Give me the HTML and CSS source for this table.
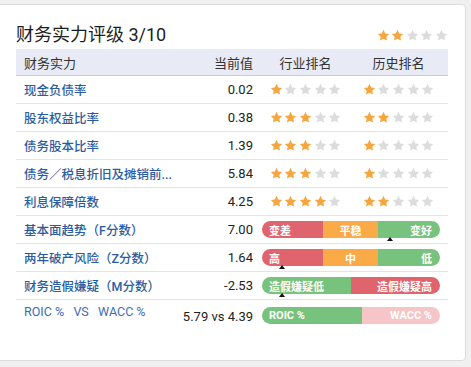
FILE: index.html
```html
<!DOCTYPE html>
<html lang="zh">
<head>
<meta charset="utf-8">
<title>财务实力评级</title>
<link rel="stylesheet" href="styles.css">
</head>
<body>
<svg class="defs" width="0" height="0" aria-hidden="true">
  <symbol id="star" viewBox="0 0 24 24"><path d="M12 1.5l3.2 6.6 7.3 1-5.3 5 1.3 7.2L12 17.9l-6.5 3.4 1.3-7.2-5.3-5 7.3-1z"/></symbol>
</svg>
<div class="card">
  <div class="title-row">
    <h2 class="title">财务实力评级 3/10</h2>
    <div class="stars"><svg class="on"><use href="#star"/></svg><svg class="on"><use href="#star"/></svg><svg><use href="#star"/></svg><svg><use href="#star"/></svg><svg><use href="#star"/></svg></div>
  </div>
  <div class="table">
    <div class="row head">
      <div class="name">财务实力</div>
      <div class="val">当前值</div>
      <div class="c">行业排名</div>
      <div class="c">历史排名</div>
    </div>
    <div class="row">
      <div class="name">现金负债率</div>
      <div class="val">0.02</div>
      <div class="c"><div class="stars"><svg class="on"><use href="#star"/></svg><svg><use href="#star"/></svg><svg><use href="#star"/></svg><svg><use href="#star"/></svg><svg><use href="#star"/></svg></div></div>
      <div class="c"><div class="stars"><svg class="on"><use href="#star"/></svg><svg><use href="#star"/></svg><svg><use href="#star"/></svg><svg><use href="#star"/></svg><svg><use href="#star"/></svg></div></div>
    </div>
    <div class="row">
      <div class="name">股东权益比率</div>
      <div class="val">0.38</div>
      <div class="c"><div class="stars"><svg class="on"><use href="#star"/></svg><svg class="on"><use href="#star"/></svg><svg class="on"><use href="#star"/></svg><svg><use href="#star"/></svg><svg><use href="#star"/></svg></div></div>
      <div class="c"><div class="stars"><svg class="on"><use href="#star"/></svg><svg class="on"><use href="#star"/></svg><svg><use href="#star"/></svg><svg><use href="#star"/></svg><svg><use href="#star"/></svg></div></div>
    </div>
    <div class="row">
      <div class="name">债务股本比率</div>
      <div class="val">1.39</div>
      <div class="c"><div class="stars"><svg class="on"><use href="#star"/></svg><svg class="on"><use href="#star"/></svg><svg class="on"><use href="#star"/></svg><svg><use href="#star"/></svg><svg><use href="#star"/></svg></div></div>
      <div class="c"><div class="stars"><svg class="on"><use href="#star"/></svg><svg><use href="#star"/></svg><svg><use href="#star"/></svg><svg><use href="#star"/></svg><svg><use href="#star"/></svg></div></div>
    </div>
    <div class="row">
      <div class="name">债务／税息折旧及摊销前...</div>
      <div class="val">5.84</div>
      <div class="c"><div class="stars"><svg class="on"><use href="#star"/></svg><svg class="on"><use href="#star"/></svg><svg class="on"><use href="#star"/></svg><svg><use href="#star"/></svg><svg><use href="#star"/></svg></div></div>
      <div class="c"><div class="stars"><svg class="on"><use href="#star"/></svg><svg><use href="#star"/></svg><svg><use href="#star"/></svg><svg><use href="#star"/></svg><svg><use href="#star"/></svg></div></div>
    </div>
    <div class="row">
      <div class="name">利息保障倍数</div>
      <div class="val">4.25</div>
      <div class="c"><div class="stars"><svg class="on"><use href="#star"/></svg><svg class="on"><use href="#star"/></svg><svg class="on"><use href="#star"/></svg><svg class="on"><use href="#star"/></svg><svg><use href="#star"/></svg></div></div>
      <div class="c"><div class="stars"><svg class="on"><use href="#star"/></svg><svg class="on"><use href="#star"/></svg><svg><use href="#star"/></svg><svg><use href="#star"/></svg><svg><use href="#star"/></svg></div></div>
    </div>
    <div class="row">
      <div class="name">基本面趋势（F分数）</div>
      <div class="val">7.00</div>
      <div class="bar">
        <div class="seg red l">变差</div>
        <div class="seg orange m">平稳</div>
        <div class="seg green r">变好</div>
        <span class="marker" style="left:125px"></span>
      </div>
    </div>
    <div class="row">
      <div class="name">两年破产风险（Z分数）</div>
      <div class="val">1.64</div>
      <div class="bar">
        <div class="seg red l">高</div>
        <div class="seg orange m">中</div>
        <div class="seg green r">低</div>
        <span class="marker" style="left:17px"></span>
      </div>
    </div>
    <div class="row">
      <div class="name">财务造假嫌疑（M分数）</div>
      <div class="val">-2.53</div>
      <div class="bar">
        <div class="seg green l">造假嫌疑低</div>
        <div class="seg red r">造假嫌疑高</div>
        <span class="marker" style="left:17px"></span>
      </div>
    </div>
    <div class="row last">
      <div class="name light">ROIC %&nbsp;&nbsp; VS &nbsp;&nbsp;WACC %</div>
      <div class="val">5.79 vs 4.39</div>
      <div class="bar">
        <div class="seg green l" style="flex:5.79">ROIC %</div>
        <div class="seg pink r" style="flex:4.39">WACC %</div>
      </div>
    </div>
  </div>
</div>
</body>
</html>
```
FILE: styles.css
```css
* { box-sizing: border-box; }
body {
  margin: 0;
  background: #f0f0f0;
  font-family: Roboto, "Noto Sans CJK SC", sans-serif;
  color: #222;
}
.defs { position: absolute; width: 0; height: 0; }
.card {
  margin: 4px 0 0 -6px;
  width: 472px;
  height: 357px;
  background: #fff;
  border: 1px solid #dcdcdc;
  border-radius: 4px;
  padding: 15px 17px 0 21px;
}
.title-row {
  display: flex;
  justify-content: space-between;
  align-items: center;
  height: 29px;
}
.title {
  margin: 0;
  font-size: 18px;
  font-weight: normal;
  line-height: 29px;
  color: #1e1e1e;
}
.title-row .stars { margin-right: 0; margin-top: 2px; }
.stars { display: flex; gap: 1.6px; }
.stars svg { width: 13px; height: 13px; fill: #dcdcdc; }
.stars svg.on { fill: #f5a640; }
.table { display: flex; flex-direction: column; }
.row {
  display: grid;
  grid-template-columns: minmax(0, 1fr) auto 93px 93px;
  align-items: center;
  height: 28px;
  padding: 0 3px 0 8px;
  border-bottom: 1px solid #e4e4e4;
}
.row > .val { min-width: 56px; }
.row.head {
  height: 27px;
  background: #e8ebf5;
  border-bottom: 1px solid #c9cdd8;
  font-size: 13px;
  color: #333;
}
.row.last { border-bottom: none; height: 30px; }
.name {
  font-size: 12.5px;
  color: #2b5c9f;
  font-weight: 500;
  white-space: nowrap;
}
.head .name { color: #333; font-size: 13px; font-weight: normal; }
.name.light {
  align-self: start;
  padding-top: 4px;
  font-weight: normal;
  font-size: 12.5px;
  color: #3b6db5;
}
.val {
  text-align: right;
  padding-right: 6px;
  font-size: 13px;
  white-space: nowrap;
}
.last .val { padding-top: 2px; }
.c { display: flex; justify-content: center; }
.bar {
  grid-column: 3 / 5;
  position: relative;
  display: flex;
  height: 17px;
  margin: 0 5px 0 3px;
}
.seg {
  flex: 1;
  display: flex;
  align-items: center;
  color: #fff;
  font-size: 11px;
  font-weight: bold;
  white-space: nowrap;
  overflow: hidden;
}
.seg.l { border-radius: 9px 0 0 9px; padding-left: 7px; }
.seg.m { justify-content: center; }
.seg.r { border-radius: 0 9px 9px 0; justify-content: flex-end; padding-right: 8px; }
.red { background: #e0646e; }
.orange { background: #fbaa48; }
.green { background: #77c27c; }
.pink { background: #f6c5c7; }
.marker {
  position: absolute;
  top: 16px;
  width: 0;
  height: 0;
  border-left: 3.5px solid transparent;
  border-right: 3.5px solid transparent;
  border-bottom: 4px solid #111;
}
```
